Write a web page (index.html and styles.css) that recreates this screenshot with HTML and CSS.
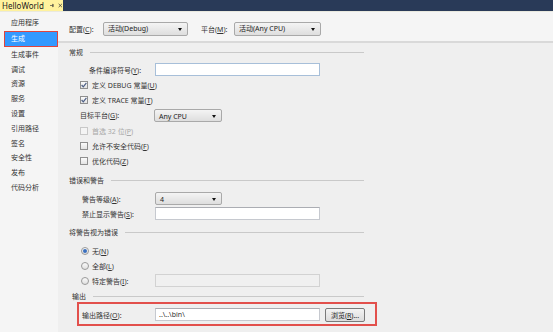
FILE: index.html
```html
<!DOCTYPE html>
<html lang="zh-CN">
<head>
    <meta charset="utf-8">
    <title>HelloWorld - 生成</title>
    <link rel="stylesheet" href="styles.css">
</head>
<body>
    <div class="tabbar">
        <div class="tab">
            <span class="tab-title">HelloWorld</span>
            <svg class="pin" width="7" height="7" viewBox="0 0 7 7"><path d="M0 3.5H4M4 1V6M4 2.5H6.5V4.5H4" stroke="#3c3c3c" stroke-width="1" fill="none"/></svg>
            <svg class="close" width="7" height="7" viewBox="0 0 7 7"><path d="M1 1L6 6M6 1L1 6" stroke="#3c3c3c" stroke-width="1.2"/></svg>
        </div>
    </div>

    <div class="main">
        <ul class="sidebar">
            <li>应用程序</li>
            <li class="active">生成</li>
            <li>生成事件</li>
            <li>调试</li>
            <li>资源</li>
            <li>服务</li>
            <li>设置</li>
            <li>引用路径</li>
            <li>签名</li>
            <li>安全性</li>
            <li>发布</li>
            <li>代码分析</li>
        </ul>

        <div class="content">
            <div class="config-bar">
                <span class="bar-label">配置(<u>C</u>):</span>
                <div class="select sel-config">活动(Debug)</div>
                <span class="bar-label plat">平台(<u>M</u>):</span>
                <div class="select sel-platform">活动(Any CPU)</div>
            </div>

            <div class="pages">
                <div class="group-head head-general"><span>常规</span></div>
                <div class="row first">
                    <span class="lbl lbl-cond">条件编译符号(<u>Y</u>):</span>
                    <div class="input input-focus"></div>
                </div>
                <div class="row">
                    <span class="cb checked"><svg width="6" height="6" viewBox="0 0 6 6"><path d="M0.6 3L2.3 4.8L5.4 0.8" stroke="#4d5f86" stroke-width="1.2" fill="none"/></svg></span>
                    <span>定义 DEBUG 常量(<u>U</u>)</span>
                </div>
                <div class="row">
                    <span class="cb checked"><svg width="6" height="6" viewBox="0 0 6 6"><path d="M0.6 3L2.3 4.8L5.4 0.8" stroke="#4d5f86" stroke-width="1.2" fill="none"/></svg></span>
                    <span>定义 TRACE 常量(<u>T</u>)</span>
                </div>
                <div class="row row-tall">
                    <span class="lbl lbl-target">目标平台(<u>G</u>):</span>
                    <div class="select sel-target">Any CPU</div>
                </div>
                <div class="row disabled">
                    <span class="cb"></span>
                    <span>首选 32 位(<u>P</u>)</span>
                </div>
                <div class="row">
                    <span class="cb"></span>
                    <span>允许不安全代码(<u>F</u>)</span>
                </div>
                <div class="row">
                    <span class="cb"></span>
                    <span>优化代码(<u>Z</u>)</span>
                </div>

                <div class="group-head head-errors"><span>错误和警告</span></div>
                <div class="row first-warn">
                    <span class="lbl lbl-warn">警告等级(<u>A</u>):</span>
                    <div class="select sel-level">4</div>
                </div>
                <div class="row">
                    <span class="lbl lbl-warn">禁止显示警告(<u>S</u>):</span>
                    <div class="input"></div>
                </div>

                <div class="group-head head-treat"><span>将警告视为错误</span></div>
                <div class="row first-radio">
                    <span class="radio on"></span>
                    <span>无(<u>N</u>)</span>
                </div>
                <div class="row">
                    <span class="radio"></span>
                    <span>全部(<u>L</u>)</span>
                </div>
                <div class="row">
                    <span class="radio"></span>
                    <span class="lbl-radio">特定警告(<u>I</u>):</span>
                    <div class="input input-off"></div>
                </div>

                <div class="group-head head-output"><span>输出</span></div>
                <div class="output-box">
                    <div class="row out-row">
                        <span class="lbl lbl-out">输出路径(<u>O</u>):</span>
                        <div class="input">..\..\bin\</div>
                        <button class="browse">浏览(<u>R</u>)...</button>
                    </div>
                </div>
            </div>
        </div>
    </div>
</body>
</html>
```

FILE: styles.css
```css
html, body { margin: 0; padding: 0; }
body {
    width: 553px;
    height: 332px;
    overflow: hidden;
    background: #efefef;
    font-family: "Noto Sans", "Noto Sans CJK SC", sans-serif;
    font-size: 7px;
    color: #333;
}
u { text-decoration: underline; text-underline-offset: 1px; }

/* document tab strip */
.tabbar { height: 11px; background: #293a58; display: flex; border-bottom: 1px solid #e9e9df; }
.tab {
    width: 63px;
    height: 11px;
    background: #fff29d;
    display: flex;
    align-items: center;
    padding-left: 2px;
    box-sizing: border-box;
}
.tab-title { font-size: 8px; color: #1c1c1c; line-height: 11px; }
.pin { margin-left: 6px; }
.close { margin-left: 4px; }

.main { display: flex; height: 320px; }

/* left navigation */
.sidebar {
    width: 58px;
    flex: none;
    margin: 0;
    padding: 4px 0 0 0;
    list-style: none;
    background: #f5f5f5;
}
.sidebar li {
    height: 14.8px;
    line-height: 14.8px;
    padding-left: 11px;
    color: #333;
}
.sidebar li.active {
    margin: 0 0 1px 4px;
    height: 14px;
    line-height: 14px;
    padding-left: 6px;
    background: #3399ff;
    color: #fff;
    border: 1.5px solid #e0443e;
}

.content { flex: 1; }

.config-bar {
    height: 31px;
    background: #f5f5f5;
    border-bottom: 2px solid #d9d9d9;
    display: flex;
    align-items: center;
    padding-left: 11px;
    padding-top: 4px;
    box-sizing: border-box;
}
.bar-label { width: 34px; }
.bar-label.plat { margin-left: 13px; width: 33px; }

.select {
    position: relative;
    height: 13px;
    line-height: 13px;
    box-sizing: border-box;
    padding-left: 4px;
    border: 1px solid #a9a9a9;
    border-radius: 2px;
    background: linear-gradient(#f4f4f4, #dedede);
    color: #222;
}
.select::after {
    content: "";
    position: absolute;
    right: 5px;
    top: 5px;
    border-left: 2.5px solid transparent;
    border-right: 2.5px solid transparent;
    border-top: 3px solid #111;
}
.sel-config { width: 85px; height: 14px; line-height: 12px; }
.sel-platform { width: 87px; height: 14px; line-height: 12px; }
.sel-target { width: 68px; margin-left: -1px; }
.sel-level { width: 67px; }

.pages { padding-left: 11px; padding-top: 2px; }

.group-head {
    display: flex;
    align-items: center;
    width: 295px;
    height: 14px;
    color: #333;
}
.group-head::after {
    content: "";
    flex: 1;
    height: 1px;
    background: #c9c9c9;
    margin-left: 7px;
}
.head-errors { margin-top: 5px; }
.head-treat { margin-top: 4px; }
.head-output { margin-top: 2px; height: 12px; padding-left: 3px; width: 292px; }

.row {
    display: flex;
    align-items: center;
    height: 15px;
    padding-left: 11px;
}
.row.first { margin-top: 3px; }
.row.row-tall { height: 16px; }
.row.first-warn { margin-top: 4px; }
.row.first-radio { margin-top: 4px; }
.row.disabled { color: #a8a8a8; }

.lbl { width: 75px; flex: none; box-sizing: border-box; }
.lbl-cond { padding-left: 9px; }
.lbl-warn { padding-left: 2px; }
.lbl-radio { width: 63px; }

.input {
    width: 165px;
    height: 13px;
    line-height: 12px;
    box-sizing: border-box;
    border: 1px solid #c6c9cf;
    border-top-color: #abadb3;
    background: #fff;
    padding-left: 3px;
}
.input-focus { border-color: #a7bfd9; }
.input-off { background: #f0f0f0; border-color: #d2d2d2; }

.cb {
    width: 8px;
    height: 8px;
    box-sizing: border-box;
    border: 1px solid #8f8f8f;
    background: linear-gradient(#fbfbfb, #e3e3e3);
    margin-right: 4px;
    display: flex;
    align-items: center;
    justify-content: center;
}
.disabled .cb { border-color: #c8c8c8; background: #f4f4f4; }

.radio {
    width: 8px;
    height: 8px;
    box-sizing: border-box;
    border-radius: 50%;
    border: 1px solid #9a9a9a;
    background: linear-gradient(#fafafa, #e0e0e0);
    margin: 0 3px 0 1px;
    display: flex;
    align-items: center;
    justify-content: center;
}
.radio.on::after {
    content: "";
    width: 4px;
    height: 4px;
    border-radius: 50%;
    background: #3a6fbf;
}

.output-box {
    margin-left: 8px;
    width: 300px;
    box-sizing: border-box;
    border: 2px solid #e2504c;
    padding: 3px 0 2px 3px;
}
.out-row { padding-left: 0; }
.lbl-out { width: 73px; }

.browse {
    margin-left: 5px;
    width: 40px;
    height: 14px;
    padding: 0;
    font: inherit;
    color: #222;
    border: 1px solid #7a7a7a;
    border-radius: 2px;
    background: linear-gradient(#f3f3f3, #dcdcdc);
}
```
